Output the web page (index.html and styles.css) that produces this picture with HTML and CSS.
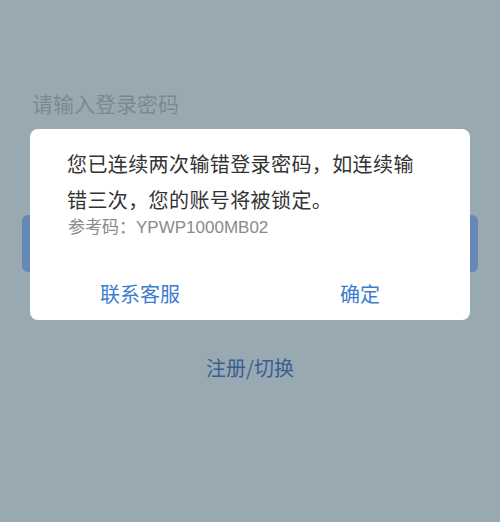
FILE: index.html
```html
<!DOCTYPE html>
<html lang="zh-CN">

<head>
    <meta charset="UTF-8">
    <meta name="viewport" content="width=device-width, initial-scale=1.0">
    <title>登录</title>
    <link rel="stylesheet" href="styles.css">
</head>

<body>
    <div class="login-page">
        <h2 class="login-title">请输入登录密码</h2>
        <button class="login-btn" type="button" aria-label="登录"></button>
        <a class="switch-link" href="#">注册/切换</a>
    </div>

    <!-- Alert Modal -->
    <div class="alert-modal">
        <p class="alert-msg">您已连续两次输错登录密码，如连续输错三次，您的账号将被锁定。</p>
        <p class="alert-code">参考码：YPWP1000MB02</p>
        <div class="alert-actions">
            <button type="button">联系客服</button>
            <button type="button">确定</button>
        </div>
    </div>
</body>

</html>
```

FILE: styles.css
```css
/* General Styles */
body {
    font-family: "Noto Sans CJK SC", "Noto Sans", sans-serif;
    background-color: #99a9b1;
    margin: 0;
    height: 522px;
    overflow: hidden;
}

.login-page {
    padding: 89px 22px 0;
    display: flex;
    flex-direction: column;
}

.login-title {
    margin: 0 0 0 10px;
    font-size: 21px;
    line-height: 28px;
    font-weight: 400;
    color: #7a8991;
}

.login-btn {
    margin-top: 98px;
    height: 57px;
    border: none;
    border-radius: 6px;
    background-color: #6589b4;
}

.switch-link {
    margin-top: 82px;
    align-self: center;
    font-size: 20px;
    line-height: 28px;
    color: #395e92;
    text-decoration: none;
}

/* Alert Modal */
.alert-modal {
    position: absolute;
    top: 129px;
    left: 30px;
    width: 440px;
    height: 191px;
    box-sizing: border-box;
    background: #fff;
    border-radius: 8px;
    padding: 17px 0 0;
}

.alert-msg {
    margin: 0;
    padding: 0 50px 0 37px;
    font-size: 20px;
    line-height: 36px;
    letter-spacing: 0.4px;
    color: #333;
}

.alert-code {
    margin: 0;
    padding: 0 37px 0 38px;
    font-family: "Liberation Sans", "Noto Sans CJK SC", sans-serif;
    font-size: 17px;
    line-height: 20px;
    color: #8a8a8a;
}

.alert-actions {
    display: flex;
    margin-top: 28px;
    height: 54px;
}

.alert-actions button {
    flex: 1;
    border: none;
    background: none;
    font-family: inherit;
    font-size: 20px;
    color: #3b7cce;
    padding: 0;
    cursor: pointer;
}
```
